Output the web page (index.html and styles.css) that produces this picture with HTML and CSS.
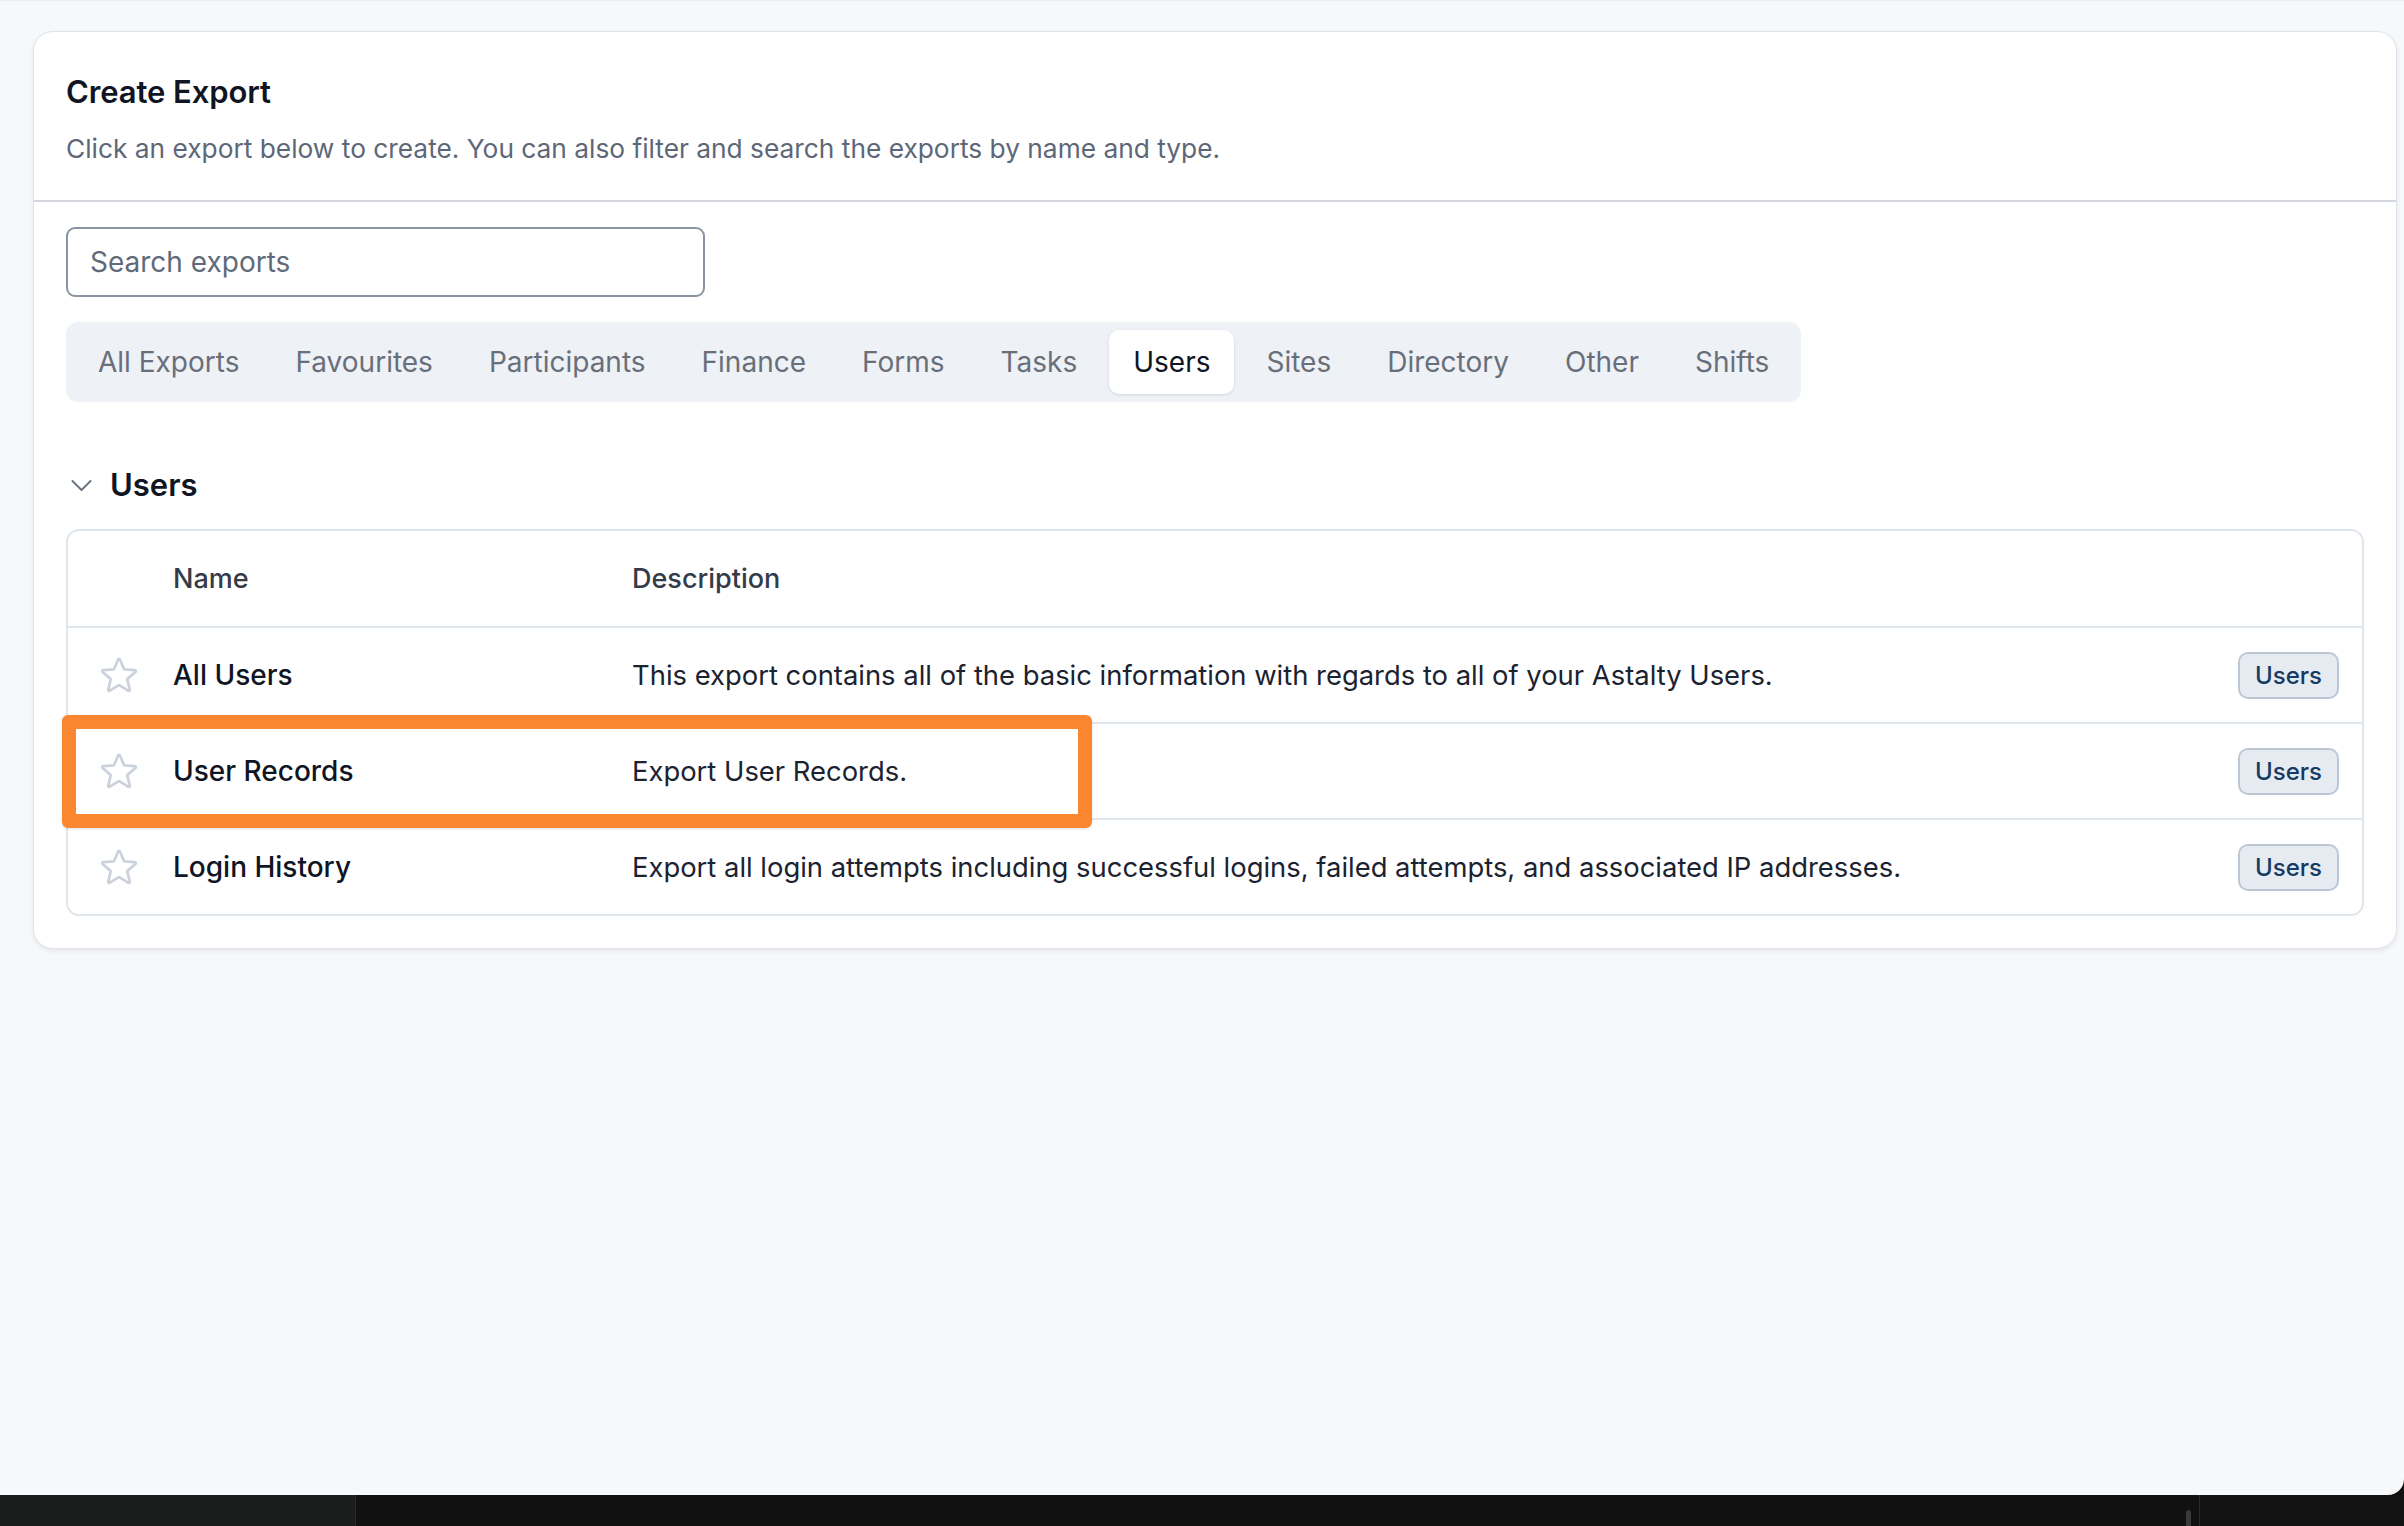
FILE: index.html
```html
<!DOCTYPE html>
<html lang="en">
<head>
<meta charset="utf-8">
<title>Create Export</title>
<link rel="stylesheet" href="styles.css">
</head>
<body>
<div class="screen">
  <section class="card">
    <header class="card-head">
      <h1 class="title">Create Export</h1>
      <p class="subtitle">Click an export below to create. You can also filter and search the exports by name and type.</p>
    </header>
    <div class="card-body">
      <input class="search" type="text" placeholder="Search exports">
      <nav class="tabs">
        <span class="tab">All Exports</span>
        <span class="tab">Favourites</span>
        <span class="tab">Participants</span>
        <span class="tab">Finance</span>
        <span class="tab">Forms</span>
        <span class="tab">Tasks</span>
        <span class="tab active">Users</span>
        <span class="tab">Sites</span>
        <span class="tab">Directory</span>
        <span class="tab">Other</span>
        <span class="tab">Shifts</span>
      </nav>
      <h2 class="section">
        <svg class="chevron" viewBox="0 0 24 24" fill="none" stroke="currentColor" stroke-width="1.6" stroke-linecap="round" stroke-linejoin="round"><path d="m19.5 8.25-7.5 7.5-7.5-7.5"/></svg>
        <span>Users</span>
      </h2>
      <div class="table-wrap">
        <div class="table">
          <div class="row head">
            <span class="cell"></span>
            <span class="cell">Name</span>
            <span class="cell">Description</span>
            <span class="cell"></span>
          </div>
          <div class="row">
            <span class="cell star-cell"><svg class="star" viewBox="0 0 24 24" fill="none" stroke="currentColor" stroke-width="1.5" stroke-linejoin="round"><path d="M11.48 3.499a.562.562 0 0 1 1.04 0l2.125 5.111a.563.563 0 0 0 .475.345l5.518.442c.499.04.701.663.321.988l-4.204 3.602a.563.563 0 0 0-.182.557l1.285 5.385a.562.562 0 0 1-.84.61l-4.725-2.885a.562.562 0 0 0-.586 0L6.982 20.54a.562.562 0 0 1-.84-.61l1.285-5.386a.562.562 0 0 0-.182-.557l-4.204-3.602a.562.562 0 0 1 .321-.988l5.518-.442a.563.563 0 0 0 .475-.345L11.48 3.5Z"/></svg></span>
            <span class="cell name">All Users</span>
            <span class="cell desc">This export contains all of the basic information with regards to all of your Astalty Users.</span>
            <span class="cell"><span class="badge">Users</span></span>
          </div>
          <div class="row">
            <span class="cell star-cell"><svg class="star" viewBox="0 0 24 24" fill="none" stroke="currentColor" stroke-width="1.5" stroke-linejoin="round"><path d="M11.48 3.499a.562.562 0 0 1 1.04 0l2.125 5.111a.563.563 0 0 0 .475.345l5.518.442c.499.04.701.663.321.988l-4.204 3.602a.563.563 0 0 0-.182.557l1.285 5.385a.562.562 0 0 1-.84.61l-4.725-2.885a.562.562 0 0 0-.586 0L6.982 20.54a.562.562 0 0 1-.84-.61l1.285-5.386a.562.562 0 0 0-.182-.557l-4.204-3.602a.562.562 0 0 1 .321-.988l5.518-.442a.563.563 0 0 0 .475-.345L11.48 3.5Z"/></svg></span>
            <span class="cell name">User Records</span>
            <span class="cell desc">Export User Records.</span>
            <span class="cell"><span class="badge">Users</span></span>
          </div>
          <div class="row">
            <span class="cell star-cell"><svg class="star" viewBox="0 0 24 24" fill="none" stroke="currentColor" stroke-width="1.5" stroke-linejoin="round"><path d="M11.48 3.499a.562.562 0 0 1 1.04 0l2.125 5.111a.563.563 0 0 0 .475.345l5.518.442c.499.04.701.663.321.988l-4.204 3.602a.563.563 0 0 0-.182.557l1.285 5.385a.562.562 0 0 1-.84.61l-4.725-2.885a.562.562 0 0 0-.586 0L6.982 20.54a.562.562 0 0 1-.84-.61l1.285-5.386a.562.562 0 0 0-.182-.557l-4.204-3.602a.562.562 0 0 1 .321-.988l5.518-.442a.563.563 0 0 0 .475-.345L11.48 3.5Z"/></svg></span>
            <span class="cell name">Login History</span>
            <span class="cell desc">Export all login attempts including successful logins, failed attempts, and associated IP addresses.</span>
            <span class="cell"><span class="badge">Users</span></span>
          </div>
        </div>
        <div class="highlight"></div>
      </div>
    </div>
  </section>
</div>
<footer class="dock">
  <div class="dock-left"></div>
  <div class="dock-mid"><span class="dock-pill"></span></div>
  <div class="dock-right"></div>
</footer>
</body>
</html>
```

FILE: styles.css
```css
* { box-sizing: border-box; }

html, body {
  margin: 0;
  padding: 0;
}

body {
  width: 2404px;
  height: 1526px;
  overflow: hidden;
  background: #111111;
  font-family: Inter, "Noto Sans", "Liberation Sans", sans-serif;
  color: #111827;
}

.screen {
  height: 1495px;
  background: #f7f8fa;
  border-top: 1px solid #eceef1;
  border-bottom-right-radius: 16px;
  padding: 30px 7px 0 33px;
}

.card {
  background: #ffffff;
  border: 1px solid #dfe4ec;
  border-radius: 20px;
  box-shadow: 0 2px 4px rgba(30, 41, 59, 0.09);
}

.card-head {
  padding: 40px 32px 31px 32px;
  border-bottom: 2px solid #d3d7dd;
}

.title {
  margin: 0;
  font-size: 31px;
  line-height: 40px;
  font-weight: 600;
  color: #0f1522;
  letter-spacing: -0.1px;
}

.subtitle {
  margin: 17px 0 0 0;
  font-size: 26.3px;
  line-height: 40px;
  font-weight: 400;
  color: #5d6778;
}

.card-body {
  padding: 25px 32px 32px 32px;
}

.search {
  display: block;
  width: 639px;
  height: 70px;
  border: 2px solid #8a94a3;
  border-radius: 9px;
  padding: 0 22px;
  font-family: inherit;
  font-size: 28px;
  color: #111827;
  background: #fff;
  outline: none;
}

.search::placeholder {
  color: #616a79;
}

.tabs {
  margin-top: 25px;
  display: inline-flex;
  gap: 8px;
  padding: 8px;
  background: #eef1f6;
  border-radius: 12px;
}

.tab {
  padding: 12px 24px;
  font-size: 28px;
  line-height: 40px;
  color: #696f7a;
  border-radius: 10px;
  white-space: nowrap;
}

.tab.active {
  background: #ffffff;
  color: #0f1522;
  box-shadow: 0 1px 3px rgba(15, 23, 42, 0.12);
}

.section {
  margin: 61px 0 0 0;
  display: flex;
  align-items: center;
  gap: 14px;
  font-size: 31px;
  line-height: 44px;
  font-weight: 600;
  color: #0f1522;
}

.chevron {
  width: 29px;
  height: 29px;
  margin-left: 1px;
  color: #6b7280;
}

.table-wrap {
  position: relative;
  margin-top: 22px;
}

.table {
  border: 2px solid #e0e6ee;
  border-radius: 13px;
}

.row {
  display: grid;
  grid-template-columns: 105px 459px 1fr auto;
  align-items: center;
  height: 96px;
  padding-right: 23px;
  border-top: 2px solid #e0e6ee;
  font-size: 27.4px;
  line-height: 40px;
}

.row.head {
  border-top: none;
  height: 95px;
  font-size: 27px;
  font-weight: 500;
  color: #343b47;
}

.cell {
  display: flex;
  align-items: center;
  white-space: nowrap;
}

.star-cell {
  padding-left: 29px;
}

.star {
  width: 44px;
  height: 44px;
  color: #cbd2db;
}

.name {
  font-size: 28px;
  font-weight: 500;
  color: #0f1522;
}

.desc {
  color: #1b2230;
}

.badge {
  display: inline-block;
  height: 47px;
  padding: 0 15px;
  border: 2px solid #bcc7d6;
  border-radius: 10px;
  background: #e6ebf2;
  font-size: 24px;
  line-height: 43px;
  font-weight: 500;
  color: #163a63;
}

.highlight {
  position: absolute;
  left: -4px;
  top: 186px;
  width: 1030px;
  height: 113px;
  border: 14px solid #fa8630;
  border-radius: 6px;
  box-shadow: 0 1px 3px rgba(0, 0, 0, 0.12);
  pointer-events: none;
}

.dock {
  display: flex;
  height: 31px;
  background: #111111;
}

.dock-left {
  width: 356px;
  background: #1b1c1c;
  border-right: 1px solid #2b2b2b;
}

.dock-mid {
  flex: 1;
  display: flex;
  justify-content: flex-end;
  align-items: flex-end;
  padding-right: 8px;
  border-right: 1px solid #2b2b2b;
}

.dock-pill {
  width: 5px;
  height: 16px;
  border-radius: 3px 3px 0 0;
  background: #3a3a3a;
}

.dock-right {
  width: 204px;
  background: #121212;
}
```
